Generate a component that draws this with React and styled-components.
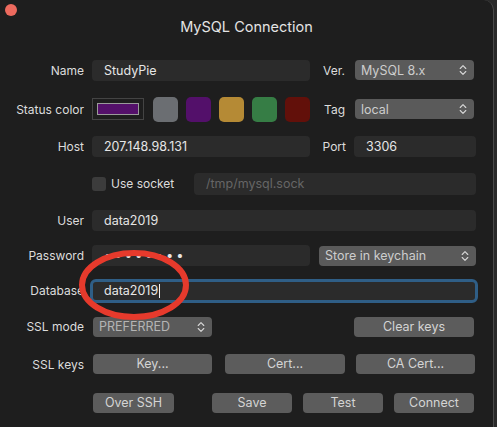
import React from 'react'
import styled, { createGlobalStyle } from 'styled-components'

const GlobalStyle = createGlobalStyle`
  html, body {
    margin: 0;
    padding: 0;
    background: #2a2a2a;
  }
  body {
    font-family: Inter, "Noto Sans", "Liberation Sans", sans-serif;
    -webkit-font-smoothing: antialiased;
  }
`

const swatches = ['#6b6e72', '#53106a', '#b58a35', '#367d45', '#62100a']

function Chevrons() {
  return (
    <svg width="8" height="12" viewBox="0 0 8 12">
      <path d="M1.2 4.5 L4 1.7 L6.8 4.5 M1.2 7.5 L4 10.3 L6.8 7.5" fill="none" stroke="#d8d8d8" strokeWidth="1.1" strokeLinecap="round" strokeLinejoin="round" />
    </svg>
  )
}

function Select({ width, children, dim }) {
  return (
    <SelectBox width={width} dim={dim}>
      <span>{children}</span>
      <Chevrons />
    </SelectBox>
  )
}

export default function App() {
  return (
    <Window>
      <GlobalStyle />
      <CloseDot />
      <Title>MySQL Connection</Title>

      <Form>
        <Row h={40}>
          <Label>Name</Label>
          <Field width={218}>StudyPie</Field>
          <SubLabel>Ver.</SubLabel>
          <Select width={119}>MySQL 8.x</Select>
        </Row>

        <Row h={38}>
          <Label>Status color</Label>
          <ColorWell>
            <span />
          </ColorWell>
          <Swatches>
            {swatches.map((c) => (
              <Swatch key={c} color={c} />
            ))}
          </Swatches>
          <SubLabel>Tag</SubLabel>
          <Select width={119}>local</Select>
        </Row>

        <Row h={37}>
          <Label>Host</Label>
          <Field width={218}>207.148.98.131</Field>
          <SubLabel narrow>Port</SubLabel>
          <Field width={122}>3306</Field>
        </Row>

        <Row h={37}>
          <Label />
          <Check />
          <CheckText>Use socket</CheckText>
          <Field grow placeholder="true" tall>/tmp/mysql.sock</Field>
        </Row>

        <Row h={36}>
          <Label>User</Label>
          <Field grow>data2019</Field>
        </Row>

        <Row h={35}>
          <Label>Password</Label>
          <Field width={218} dots>••••••••</Field>
          <Gap w={9} />
          <Select width={157}>Store in keychain</Select>
        </Row>

        <Row h={35}>
          <Label>Database</Label>
          <Focused>
            data2019<Caret />
          </Focused>
        </Row>

        <Row h={37}>
          <Label>SSL mode</Label>
          <Gap w={1} />
          <Select width={119} dim>PREFERRED</Select>
          <Spacer />
          <Button width={120}>Clear keys</Button>
          <Gap w={2} />
        </Row>

        <Row h={38}>
          <Label>SSL keys</Label>
          <Gap w={1} />
          <Button width={119}>Key...</Button>
          <Gap w={13} />
          <Button width={120}>Cert...</Button>
          <Gap w={11} />
          <Button width={119}>CA Cert...</Button>
        </Row>

        <Row h={40}>
          <Label />
          <Gap w={1} />
          <Button width={81}>Over SSH</Button>
          <Spacer />
          <Button width={80}>Save</Button>
          <Gap w={11} />
          <Button width={80}>Test</Button>
          <Gap w={11} />
          <Button width={80}>Connect</Button>
          <Gap w={2} />
        </Row>
      </Form>

      <Annotation width="497" height="427" viewBox="0 0 497 427">
        <ellipse cx="134" cy="285" rx="52" ry="32" fill="none" stroke="#e63a2c" strokeWidth="6" />
      </Annotation>
    </Window>
  )
}

const Window = styled.div`
  position: relative;
  width: 494px;
  height: 427px;
  box-sizing: border-box;
  background: #1e1e1e;
  border-right: 1px solid #4a4a4a;
  border-top-right-radius: 10px;
  overflow: hidden;
  color: #dedede;
`

const CloseDot = styled.div`
  position: absolute;
  left: 5px;
  top: 4px;
  width: 12px;
  height: 12px;
  border-radius: 50%;
  background: #ed6a5e;
`

const Title = styled.div`
  height: 50px;
  box-sizing: border-box;
  padding-top: 17px;
  text-align: center;
  font-size: 14.5px;
  color: #e4e4e4;
  line-height: 20px;
`

const Form = styled.div`
  display: flex;
  flex-direction: column;
  padding-right: 17px;
`

const Row = styled.div`
  display: flex;
  align-items: center;
  height: ${(p) => p.h}px;
  font-size: 12px;
`

const Label = styled.div`
  width: 84px;
  margin-right: 8px;
  flex-shrink: 0;
  text-align: right;
  color: #dcdcdc;
  font-size: 12px;
`

const SubLabel = styled.div`
  flex: 1;
  text-align: right;
  padding-right: ${(p) => (p.narrow ? 8 : 10)}px;
  color: #dcdcdc;
`

const Field = styled.div`
  box-sizing: border-box;
  width: ${(p) => (p.width ? `${p.width}px` : 'auto')};
  flex: ${(p) => (p.grow ? 1 : 'none')};
  height: ${(p) => (p.tall ? 22 : 21)}px;
  line-height: ${(p) => (p.tall ? 22 : 21)}px;
  padding-left: 12px;
  background: #2b2b2b;
  border-radius: 4px;
  color: ${(p) => (p.placeholder ? '#666666' : '#e6e6e6')};
  font-size: ${(p) => (p.dots ? 13 : 12.5)}px;
  letter-spacing: ${(p) => (p.dots ? '3px' : '0')};
  white-space: nowrap;
  overflow: hidden;
`

const Focused = styled.div`
  flex: 1;
  box-sizing: border-box;
  height: 24px;
  margin-left: -2px;
  margin-right: -2px;
  border: 3px solid #2f5e86;
  border-radius: 6px;
  background: #2b2b2b;
  padding-left: 11px;
  color: #e8e8e8;
  font-size: 12.5px;
  display: flex;
  align-items: center;
`

const Caret = styled.span`
  display: inline-block;
  width: 1px;
  height: 14px;
  margin-left: 1px;
  background: #f0f0f0;
`

const SelectBox = styled.div`
  box-sizing: border-box;
  width: ${(p) => p.width}px;
  height: 20px;
  flex-shrink: 0;
  display: flex;
  align-items: center;
  justify-content: space-between;
  padding: 0 7px 0 6px;
  background: #5a5a5a;
  border-radius: 4px;
  color: ${(p) => (p.dim ? '#b4b4b4' : '#cdcdcd')};
  font-size: 12.5px;
  margin-right: 2px;
`

const ColorWell = styled.div`
  box-sizing: border-box;
  width: 52px;
  height: 22px;
  border: 1px solid #444444;
  padding: 4px;
  flex-shrink: 0;

  span {
    display: block;
    box-sizing: border-box;
    height: 100%;
    background: #54106a;
    border: 1px solid #9a9a9a;
  }
`

const Swatches = styled.div`
  display: flex;
  gap: 8px;
  margin-left: 9px;
`

const Swatch = styled.div`
  width: 25px;
  height: 25px;
  border-radius: 5px;
  background: ${(p) => p.color};
`

const Check = styled.div`
  width: 14px;
  height: 14px;
  border-radius: 3px;
  background: #3c3c3c;
  flex-shrink: 0;
`

const CheckText = styled.div`
  margin-left: 5px;
  width: 83px;
  color: #dcdcdc;
`

const Gap = styled.div`
  width: ${(p) => p.w}px;
  flex-shrink: 0;
`

const Spacer = styled.div`
  flex: 1;
`

const Button = styled.div`
  box-sizing: border-box;
  width: ${(p) => p.width}px;
  height: 20px;
  flex-shrink: 0;
  background: #5c5c5c;
  border-radius: 4px;
  color: #d4d4d4;
  font-size: 12.5px;
  line-height: 20px;
  text-align: center;
`

const Annotation = styled.svg`
  position: absolute;
  left: 0;
  top: 0;
  pointer-events: none;
`
